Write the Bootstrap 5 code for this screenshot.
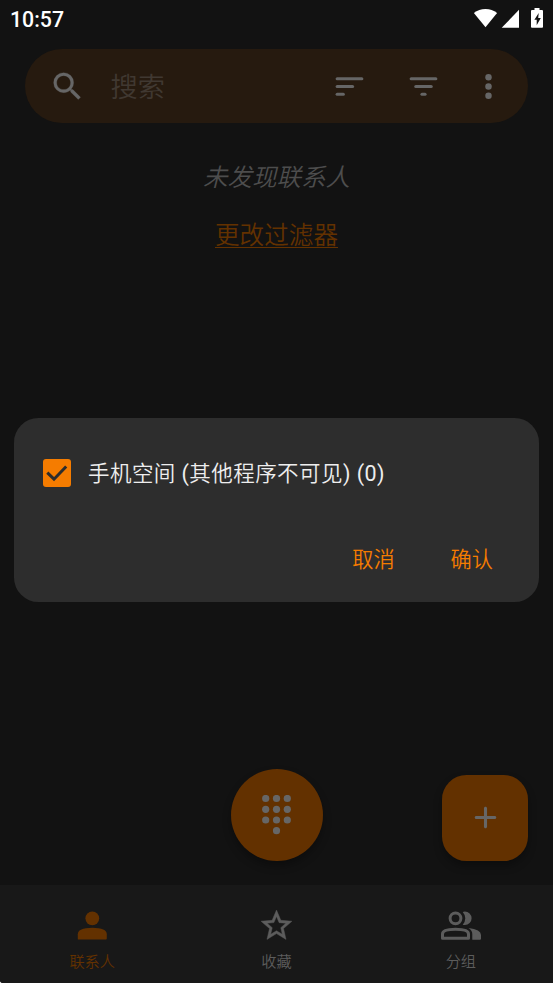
<!DOCTYPE html>
<html lang="zh-CN">
<head>
<meta charset="utf-8">
<meta name="viewport" content="width=device-width, initial-scale=1">
<title>联系人</title>
<link href="https://cdn.jsdelivr.net/npm/bootstrap@5.3.0/dist/css/bootstrap.min.css" rel="stylesheet">
<style>
html { background: #fff; }
body { background: #fff; font-family: Roboto, "Noto Sans CJK SC", sans-serif; font-weight: 350; }
svg { display: block; fill: currentColor; flex: none; }
.screen { width: 553px; height: 983px; background: #121212; border-radius: 0 0 0 3px; overflow: hidden; }
.status { height: 38px; padding: 0 9px 0 10px; color: #fff; font-size: 21.3px; font-weight: 500; line-height: 40px; }
.search { height: 74px; margin: 11px 25px 0 24.5px; padding: 0 21.500px 0 24px; border-radius: 37px; background: #261a0f; color: #666; }
.search-hint { font-size: 27.2px; line-height: 40px; color: #403831; margin-left: 25px; padding-top: 3px; }
.sort-icon { margin-right: 37px; }
.filter-icon { margin-right: 27.5px; }
.empty { margin-top: 37px; font-size: 24.5px; line-height: 36px; color: #4d4d4d; }
.filter-link { margin-top: 21px; font-size: 24.6px; line-height: 38px; height: 36px; color: #633100; }
.filter-link span { display: inline-block; height: 31px; line-height: 38px; border-bottom: 1px solid #633100; }
.fabs { display: grid; grid-template-columns: 1fr 92px 1fr; height: 92.5px; margin-bottom: 24px; }
.fab { color: #666; background: #633100; border: 0; padding: 0; box-shadow: 0 5px 8px rgba(0,0,0,.3); }
.fab-dial { width: 92px; height: 92px; border-radius: 50%; }
.fab-add { width: 86px; height: 86px; border-radius: 24.5px; margin-right: 25px; padding-bottom: 1px; }
.tabs { height: 98px; background: #181818; color: #5c5c5c; padding-top: 22px; }
.tab-label { font-size: 15.2px; line-height: 22px; margin-top: 7px; }
.tab-on { color: #633100; }
.prompt { position: absolute; left: 14px; top: 418px; width: 525px; height: 184px; border-radius: 24.5px; background: #2d2d2d; color: #eee; padding: 41px 29px 0; }
.prompt-text { font-size: 21.5px; line-height: 28px; height: 28px; padding-top: 1px; letter-spacing: .45px; margin-left: 17px; }
.tick { width: 28px; height: 28px; border-radius: 3px; background: #f57c00; color: #2d2d2d; }
.actions { margin-top: 57px; gap: 56px; padding-right: 17px; }
.act { background: none; border: 0; padding: 0; color: #f57c00; font-size: 21.2px; line-height: 32px; font-weight: inherit; }
</style>
</head>
<body>
<main class="screen position-relative d-flex flex-column">
  <header class="status d-flex justify-content-between">
    <span>10:57</span>
    <svg width="72" height="38" viewBox="472 0 72 38" fill="#fff">
      <path d="M485.500 27.200 473.900 13.100Q479 9 485.500 9T497.100 13.100Z"/>
      <path d="M519 9.800V27.800H501.700Z"/>
      <path fill-rule="evenodd" d="M534.500 8h5v2h2.500q1 0 1 1v16q0 .8-1 .8h-10q-1 0-1-.8V11q0-1 1-1h2.500zM538.700 13 534.400 19.700h2.300v5.600l4.100-7.300h-2.600z"/>
    </svg>
  </header>
  <div class="search d-flex align-items-center">
    <svg width="37" height="37" viewBox="0 0 24 24"><path stroke="currentColor" stroke-width=".15" stroke-linejoin="round" d="M15.500 14h-.79l-.28-.27A6.471 6.471 0 0 0 16 9.500 6.500 6.500 0 1 0 9.500 16c1.610 0 3.090-.59 4.230-1.570l.27.28v.79l5 4.990L20.490 19l-4.990-5zm-6 0C7.010 14 5 11.990 5 9.500S7.010 5 9.500 5 14 7.010 14 9.500 11.990 14 9.500 14z"/></svg>
    <span class="search-hint flex-grow-1">搜索</span>
    <svg class="sort-icon" width="37" height="37" viewBox="0 0 24 24"><rect x="3" y="6" width="18" height="2" rx="1"/><rect x="3" y="11" width="12" height="2" rx="1"/><rect x="3" y="16" width="6" height="2" rx="1"/></svg>
    <svg class="filter-icon" width="37" height="37" viewBox="0 0 24 24"><rect x="3" y="6" width="18" height="2" rx="1"/><rect x="6" y="11" width="12" height="2" rx="1"/><rect x="10" y="16" width="4" height="2" rx="1"/></svg>
    <svg width="37" height="37" viewBox="0 0 24 24"><circle cx="12" cy="6" r="2.100"/><circle cx="12" cy="12" r="2.100"/><circle cx="12" cy="18" r="2.100"/></svg>
  </div>
  <div class="empty fst-italic text-center">未发现联系人</div>
  <div class="filter-link text-center"><span>更改过滤器</span></div>

  <div class="fabs mt-auto align-items-end">
    <button class="fab fab-dial d-flex align-items-center justify-content-center align-self-start" style="grid-column:2" aria-label="拨号">
      <svg width="30" height="40" viewBox="0.500 0.500 30 40"><circle cx="4.200" cy="4" r="3.600"/><circle cx="15" cy="4" r="3.600"/><circle cx="25.800" cy="4" r="3.600"/><circle cx="4.200" cy="14.800" r="3.600"/><circle cx="15" cy="14.800" r="3.600"/><circle cx="25.800" cy="14.800" r="3.600"/><circle cx="4.200" cy="25.500" r="3.600"/><circle cx="15" cy="25.500" r="3.600"/><circle cx="25.800" cy="25.500" r="3.600"/><circle cx="15" cy="36.200" r="3.600"/></svg>
    </button>
    <button class="fab fab-add d-flex align-items-center justify-content-center ms-auto" aria-label="添加">
      <svg width="37" height="37" viewBox="0 0 24 24"><path d="M18 13h-5v5c0 .55-.45 1-1 1s-1-.45-1-1v-5H6c-.55 0-1-.45-1-1s.45-1 1-1h5V6c0-.55.45-1 1-1s1 .45 1 1v5h5c.55 0 1 .45 1 1s-.45 1-1 1z"/></svg>
    </button>
  </div>
  <nav class="tabs row g-0">
    <div class="col d-flex flex-column align-items-center tab-on">
      <svg width="37" height="37" viewBox="0 0 37 37"><circle cx="18.300" cy="11.300" r="6.900"/><path d="M3.800 32.500v-5.300Q3.800 20.700 18.300 20.700T32.800 27.200V31.500q0 1-1 1z"/></svg>
      <span class="tab-label">联系人</span>
    </div>
    <div class="col d-flex flex-column align-items-center">
      <svg width="37" height="37" viewBox="0 0 24 24"><path stroke="currentColor" stroke-width=".3" stroke-linejoin="round" d="M22 9.240l-7.190-.62L12 2 9.190 8.630 2 9.240l5.460 4.730L5.820 21 12 17.270 18.180 21l-1.630-7.030L22 9.240zM12 15.400l-3.760 2.270 1-4.280-3.320-2.880 4.380-.38L12 6.100l1.710 4.040 4.380.38-3.320 2.880 1 4.280L12 15.400z"/></svg>
      <span class="tab-label">收藏</span>
    </div>
    <div class="col d-flex flex-column align-items-center">
      <svg width="42" height="37" viewBox="440 907 42 37">
        <g fill="none" stroke="currentColor" stroke-width="3"><circle cx="455.500" cy="918.300" r="5.400"/><path d="M442.500 938.200v-4.200Q442.500 929.200 455.500 929.200T468.500 934v4.200z" stroke-linejoin="round"/></g>
        <path d="M462.700 911.900q1.200-.4 2.100-.4a6.800 6.800 0 0 1 0 13.600q-.9 0-2.100-.4q2.600-2.800 2.600-6.400t-2.600-6.400z"/>
        <path d="M468.500 928.100Q481 929.500 481 935v3.700q0 1-1 1h-7.700v-5.500q0-3.700-3.800-6.100z"/>
      </svg>
      <span class="tab-label">分组</span>
    </div>
  </nav>

  <section class="prompt" role="dialog">
    <div class="d-flex align-items-center">
      <span class="tick"><svg width="28" height="28" viewBox="0 0 28 28"><path d="M4.300 13.700 11 20.200 23.200 7.500" fill="none" stroke="currentColor" stroke-width="3"/></svg></span>
      <span class="prompt-text">手机空间 <span class="fw-normal">(</span>其他程序不可见<span class="fw-normal">) (0)</span></span>
    </div>
    <div class="actions d-flex justify-content-end">
      <button class="act">取消</button>
      <button class="act">确认</button>
    </div>
  </section>
</main>
<script src="https://cdn.jsdelivr.net/npm/bootstrap@5.3.0/dist/js/bootstrap.bundle.min.js"></script>
</body>
</html>
